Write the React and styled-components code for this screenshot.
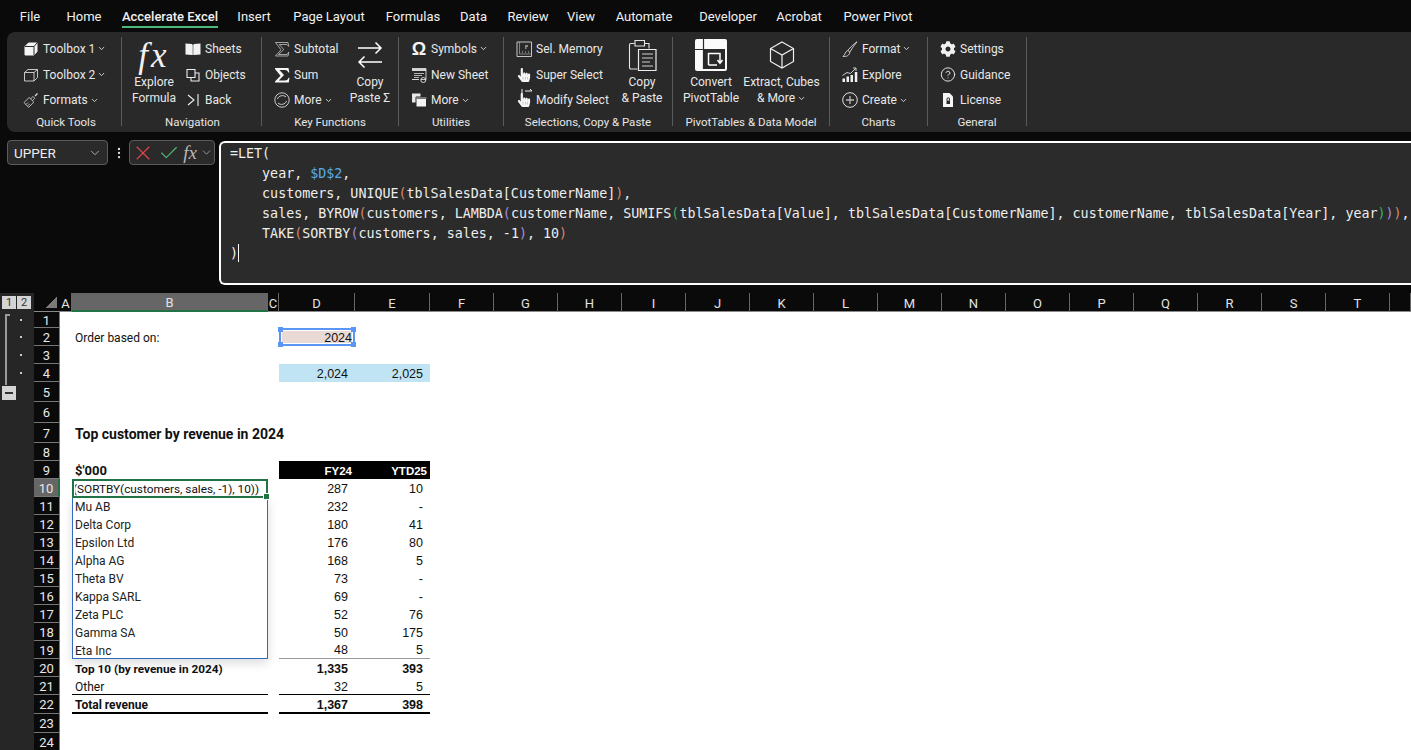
import React from "react";
import styled, { createGlobalStyle } from "styled-components";
import { ChevronDown, CircleHelp, EllipsisVertical, X, Check } from "lucide-react";
import { FaCog, FaHandPointer } from "react-icons/fa";

const Global = createGlobalStyle`
  html, body { margin: 0; padding: 0; background: #0a0a0a; overflow: hidden; }
  * { box-sizing: border-box; }
`;

const Page = styled.div`
  width: 1411px;
  height: 750px;
  overflow: hidden;
  background: #0a0a0a;
  font-family: Roboto, "Liberation Sans", sans-serif;
  display: flex;
  flex-direction: column;
`;

/* ---------- tabs ---------- */
const TabBar = styled.nav`
  height: 32px;
  padding-left: 10px;
  display: flex;
  flex: none;
`;
const Tab = styled.div`
  width: ${p => p.$w}px;
  flex: none;
  display: flex;
  justify-content: center;
  font-size: 13px;
  line-height: 18px;
  padding-top: 8px;
  color: #f0f0f0;
  font-weight: ${p => (p.$active ? 500 : 400)};
  white-space: nowrap;
`;
const TabLabel = styled.span`
  height: 20px;
  border-bottom: ${p => (p.$active ? "2px solid #4fb97c" : "none")};
`;

/* ---------- ribbon ---------- */
const Ribbon = styled.div`
  height: 100px;
  flex: none;
  margin-left: 7px;
  background: #292929;
  border-radius: 8px 0 0 8px;
  display: flex;
  align-items: stretch;
`;
const Group = styled.section`
  width: ${p => p.$w}px;
  flex: none;
  display: flex;
  flex-direction: column;
`;
const GroupBody = styled.div`
  height: 81px;
  padding-top: 4px;
  padding-left: ${p => p.$pad}px;
  display: flex;
`;
const GroupLabel = styled.div`
  height: 18px;
  text-align: center;
  padding-left: ${p => p.$pl || 0}px;
  font-size: 11.5px;
  line-height: 18px;
  color: #e6e6e6;
  white-space: nowrap;
`;
const Sep = styled.div`
  width: 1px;
  flex: none;
  margin: 5px 0 6px;
  background: #5a5a5a;
`;
const Stack = styled.div`
  display: flex;
  flex-direction: column;
  width: ${p => (p.$w ? `${p.$w}px` : "auto")};
  margin-left: ${p => p.$ml || 0}px;
  flex: none;
`;
const SmallBtn = styled.div`
  height: 26px;
  display: flex;
  align-items: center;
  font-size: 12px;
  color: #e8e8e8;
  white-space: nowrap;
`;
const IconBox = styled.span`
  width: 16px;
  height: 16px;
  margin-right: 4px;
  flex: none;
  display: flex;
  align-items: center;
  justify-content: center;
  color: #f0f0f0;
`;
const Chev = styled(ChevronDown).attrs({ size: 9, strokeWidth: 2.5 })`
  margin-left: 2px;
  color: #d8d8d8;
`;
const LargeBtn = styled.div`
  width: ${p => p.$w}px;
  flex: none;
  display: flex;
  flex-direction: column;
  align-items: center;
  font-size: 12px;
  line-height: 16px;
  color: #e8e8e8;
  white-space: nowrap;
`;
const LargeIcon = styled.div`
  height: 38px;
  display: flex;
  align-items: flex-start;
  justify-content: center;
`;
const LargeLine = styled.div`
  display: flex;
  align-items: center;
`;
const FxGlyph = styled.span`
  font-family: "Liberation Serif", serif;
  font-style: italic;
  font-size: ${p => p.$s}px;
  line-height: 1;
  color: ${p => p.$c};
`;
const LargeFx = styled(FxGlyph)`
  margin-top: 2px;
  letter-spacing: 3px;
`;
const OmegaGlyph = styled.span`
  font-family: "Liberation Sans", sans-serif;
  font-size: 18px;
  font-weight: 700;
  line-height: 16px;
  color: #f4f4f4;
`;

/* ---------- icons ---------- */
const Svg = styled.svg`
  display: block;
  flex: none;
  margin-top: ${p => p.$mt || 0}px;
`;
const I = ({ s = 16, h, vb, children, mt }) => (
  <Svg width={s} height={h || s} viewBox={vb || `0 0 ${s} ${h || s}`} fill="none" stroke="currentColor" $mt={mt}>
    {children}
  </Svg>
);
const BoxFilled = () => (
  <I><path d="M2 5.5 5.5 2H14v8.5L11 14H2Z" fill="#f4f4f4" stroke="#f4f4f4" /><path d="M2 5.5h9V14M11 5.5 14 2" stroke="#292929" /></I>
);
const BoxOutline = () => (
  <I><path d="M1.5 5.5 5 2.5h9.5v8L11 14H1.5ZM1.5 5.5H11V14M11 5.5l3.5-3" stroke="#d8d8d8" strokeWidth=".9" /></I>
);
const Brush = () => (
  <I><path d="M1 10.5 6.2 5.5l4.6 4.6-5.2 5.3C4.5 14 2.5 12.5 1 10.5ZM7.5 7l2.5-2.6 1.8 1.8L9.3 8.8M3 12.5l2-2M4.8 13.8l2-2" stroke="#c8c8c8" strokeWidth=".9" /><path d="M12 4l2.5-2.5" stroke="#dcdcdc" strokeWidth="1.2" /></I>
);
const Sheets = () => (
  <I><path d="M.5 2.5 7 3v11l-6.5-.5ZM15.5 2.5 9 3v11l6.5-.5Z" fill="#f2f2f2" stroke="none" /><path d="M7 3.5h2V14H7Z" fill="#bdbdbd" stroke="none" /></I>
);
const Objects = () => (
  <I><path d="M2 2.5h8v8H2ZM6 10.5V14h8V6h-4" stroke="#ececec" strokeWidth="1.1" /></I>
);
const Back = () => (
  <I><path d="M3 3l6 5-6 5M13 2v12" stroke="#f0f0f0" strokeWidth="1.1" /></I>
);
const SubtotalIcon = () => (
  <I><path d="M1.5 1.5H14L14.8 5.5 13 3.5H5.2L9.8 8.5 4.5 13.5H13L14.8 11 14 15H1.5L7 8.8Z" stroke="#c4c4c4" strokeWidth=".8" /></I>
);
const SumIcon = () => (
  <I><path d="M1 1h13.5l.8 4.5h-1C13.5 3.5 12.5 3 10 3H5.5l4.5 5-5.2 5.5H11c2 0 3-.7 3.5-2.7h1L14.8 15.5H1v-.9L6.5 8.7 1 2Z" fill="#f6f6f6" stroke="none" /></I>
);
const MoreCircle = () => (
  <I><circle cx="8" cy="8" r="7.2" stroke="#dcdcdc" strokeWidth=".9" /><path d="M3.5 7C4.5 3.5 9.5 2.5 12 5M12.5 9C11.5 12.5 6.5 13.5 4 11" stroke="#dcdcdc" strokeWidth=".9" /></I>
);
const Arrows = () => (
  <I s={26} h={28} mt={5}><path d="M1 7h23M18.5 1.5 24 7l-5.5 5.5M25 21H2M7.5 15.5 2 21l5.5 5.5" stroke="#fff" strokeWidth="1.5" /></I>
);
const NewSheetIcon = () => (
  <I><path d="M1 1.5h14v11H10M8 12.5H1Z" stroke="#d8d8d8" strokeWidth=".9" /><path d="M1 1.5h14V4H1Z" fill="#d8d8d8" stroke="none" /><path d="M3 6.5h10M3 8.5h8M3 10.5h5" stroke="#d8d8d8" strokeWidth=".8" /><circle cx="12.3" cy="13" r="2.5" stroke="#e8e8e8" strokeWidth=".9" /></I>
);
const UtilMore = () => (
  <I><path d="M1 1.5h8.5v9H1Z" fill="#e8e8e8" stroke="none" /><path d="M5 5h10.5v10H5Z" fill="#f4f4f4" stroke="#292929" /><path d="M5 5h10.5v2H5Z" fill="#777" stroke="none" /></I>
);
const SelMemory = () => (
  <I><path d="M1 1h14.5v14.5H1Z" stroke="#d8d8d8" strokeWidth=".9" /><path d="M3.5 1v12h12" stroke="#9a9a9a" strokeWidth=".8" /><path d="M9 5h3M9 7h1.5M6 11h.8M9 11h.8M12 11h.8" stroke="#e8e8e8" /></I>
);
const HandSlot = styled.span`
  position: relative;
  display: flex;
  color: #f6f6f6;
`;
const HandTicks = styled.svg`
  position: absolute;
  top: -5px;
  left: 4px;
`;
const Clipboard = () => (
  <I s={29} h={32} mt={3}><path d="M2.5 4.5h4M16.5 4.5H21v5M9.5 30h-7a1.5 1.5 0 0 1-1-1.5V6a1.5 1.5 0 0 1 1-1.5" stroke="#e4e4e4" strokeWidth="1.1" /><path d="M7 1.5h9.5V7H7Z" stroke="#e4e4e4" strokeWidth="1.1" /><path d="M10.5 10.5H28v21H10.5Z" stroke="#ececec" strokeWidth="1.2" /><path d="M14 15h11M14 19h11M14 23h8M14 27h11" stroke="#cfcfcf" strokeWidth="1.2" /></I>
);
const Convert = () => (
  <I s={32} mt={3}>
    <rect width="32" height="32" rx="2" fill="#fafafa" stroke="none" />
    <path d="M9 11h21v19H9Z" fill="#292929" stroke="none" />
    <path d="M8.5 0v30M0 10.5h30" stroke="#292929" strokeWidth="1.2" />
    <path d="M13.5 26V14.5H25V24M22.5 21l2.5 3.2 2.5-3.2M13.5 26H22" stroke="#fff" strokeWidth="1.5" />
  </I>
);
const Cube = () => (
  <I s={26} h={28} mt={5}><path d="M13 1 24.5 7.5v13L13 27 1.5 20.5v-13ZM1.5 7.5 13 14l11.5-6.5M13 14v13" stroke="#f0f0f0" strokeWidth="1.2" /></I>
);
const FormatPen = () => (
  <I><path d="M15 .8c-2.5 3-5 6.700-7.200 10.200L5.800 9.500C8.300 6.200 11.800 3 15 .8ZM5.800 9.500C3 10.500 3.500 13.500 1 15.500c3.500.3 6.500-1 6.800-4.500" stroke="#dedede" strokeWidth=".9" /></I>
);
const ExploreIcon = () => (
  <I><path d="M.5 11.5H3V15H.5ZM4.5 9.5H7V15H4.5ZM8.5 8H11v7H8.5ZM12.8 5h2.500v10h-2.500Z" fill="#f0f0f0" stroke="none" /><path d="M.5 8.5 5 5.500l3.500 1L13.500 1.500M11 1h3v3" stroke="#e0e0e0" strokeWidth=".9" /></I>
);
const CreateIcon = () => (
  <I><circle cx="8" cy="8" r="7.3" stroke="#e4e4e4" /><path d="M8 4v8M4 8h8" stroke="#b8b8b8" strokeWidth="1.3" /></I>
);
const LicenseIcon = () => (
  <I><path d="M3 1h6.5L13 4.500V15H3Z" fill="#f6f6f6" stroke="none" /><path d="M6.5 8.5H10V12H6.5Z" fill="#292929" stroke="none" /><path d="M7 8.5V7a1.2 1.2 0 0 1 2.500 0v1.500" stroke="#292929" /></I>
);

const HandIcon = ({ ticks }) => (
  <HandSlot>
    <FaHandPointer size={14} />
    {ticks && (
      <HandTicks width="12" height="7" viewBox="0 0 12 7" stroke="#f4f4f4" fill="none">
        <path d="M4 3h7M9 1l2 2M1 1v5" />
      </HandTicks>
    )}
  </HandSlot>
);

const Small = ({ icon, children, chev }) => (
  <SmallBtn>
    <IconBox>{icon}</IconBox>
    {children}
    {chev && <Chev />}
  </SmallBtn>
);

/* ---------- formula bar ---------- */
const FormulaRow = styled.div`
  height: 146px;
  flex: none;
  margin-top: 8px;
  margin-left: 7px;
  display: flex;
  align-items: flex-start;
`;
const NameBox = styled.div`
  width: 101px;
  height: 25px;
  flex: none;
  background: #2a2a2a;
  border: 1px solid #5c5c5c;
  border-radius: 4px;
  padding: 0 5px 0 6px;
  display: flex;
  align-items: center;
  justify-content: space-between;
  color: #eee;
  font-size: 13.5px;
`;
const Grip = styled.div`
  width: 21px;
  height: 25px;
  flex: none;
  display: flex;
  align-items: center;
  justify-content: center;
  color: #e0e0e0;
`;
const ActionBox = styled.div`
  width: 86px;
  height: 25px;
  flex: none;
  background: #2a2a2a;
  border: 1px solid #5c5c5c;
  border-radius: 4px;
  padding: 0 1px;
  display: flex;
  align-items: center;
  justify-content: space-between;
`;
const Editor = styled.div`
  flex: 1;
  height: 144px;
  margin: 1px 0 0 4px;
  padding: 1px 0 0 9px;
  background: #2b2b2b;
  border: 2px solid #fff;
  border-right: none;
  border-radius: 6px 0 0 6px;
  font-family: "DejaVu Sans Mono", "Liberation Mono", monospace;
  font-size: 13.33px;
  line-height: 20px;
  color: #eee;
  white-space: pre;
  overflow: hidden;
`;
const FLine = styled.div`
  height: 20px;
`;
const P = styled.span`
  color: ${p => ({ o: "#d5876a", v: "#a08fe0", g: "#2fb36b" }[p.$c])};
`;
const Ref = styled.span`
  color: #5aa9e6;
`;
const Caret = styled.span`
  display: inline-block;
  width: 1px;
  height: 18px;
  background: #fff;
  vertical-align: -4px;
`;

/* ---------- sheet ---------- */
const COLS = ["A", "B", "C", "D", "E", "F", "G", "H", "I", "J", "K", "L", "M", "N", "O", "P", "Q", "R", "S", "T", ""];
const colIndex = l => COLS.indexOf(l) + 3;
const ROWH = [16, 18, 18, 18, 20, 21, 20, 18, 18, 18, 18, 18, 18, 18, 18, 18, 18, 18, 18, 18, 18, 19, 19, 18];

const Sheet = styled.div`
  margin-top: 7px;
  flex: none;
  height: 458px;
  display: grid;
  grid-template-columns: 34px 26px 12px 196px 11px 76px 75px repeat(15, 64px) 1fr;
  grid-template-rows: 19px ${ROWH.map(h => `${h}px`).join(" ")};
  overflow: hidden;
`;
const Rail = styled.div`
  grid-column: 1;
  grid-row: 1 / -1;
  background: #262626;
`;
const Canvas = styled.div`
  grid-column: 3 / -1;
  grid-row: 2 / -1;
  background: #fff;
`;
const LevelBtns = styled.div`
  grid-column: 1;
  grid-row: 1;
  padding: 3px 0 0 2px;
  display: flex;
  gap: 1px;
  z-index: 1;
`;
const LevelBtn = styled.div`
  width: 14px;
  height: 13px;
  background: #d4d4d4;
  color: #333;
  font-size: 11px;
  line-height: 13px;
  text-align: center;
`;
const Corner = styled.div`
  grid-column: 2;
  grid-row: 1;
  background: #0a0a0a;
  border-bottom: 1px solid #8a8a8a;
  display: flex;
  justify-content: flex-end;
  align-items: flex-end;
  padding: 0 3px 3px 0;
`;
const CornerMark = styled.div`
  width: 11px;
  height: 11px;
  background: linear-gradient(135deg, transparent 50%, #7a7a7a 50%);
`;
const ColHead = styled.div`
  grid-column: ${p => p.$col};
  grid-row: 1;
  background: ${p => (p.$sel ? "#666" : "#0a0a0a")};
  border-right: 1px solid #666;
  border-bottom: ${p => (p.$sel ? "2px solid #217346" : "1px solid #8a8a8a")};
  color: #e4e4e4;
  font-size: 13px;
  padding-top: 2px;
  display: flex;
  align-items: center;
  justify-content: center;
`;
const RowHead = styled.div`
  grid-column: 2;
  grid-row: ${p => p.$row + 1};
  background: ${p => (p.$sel ? "#666" : "#0a0a0a")};
  border-bottom: 1px solid #777;
  border-right: ${p => (p.$sel ? "2px solid #217346" : "1px solid #777")};
  color: #e8e8e8;
  font-size: 13px;
  padding-top: 1px;
  display: flex;
  align-items: center;
  justify-content: center;
`;
const OutlineDot = styled.div`
  grid-column: 1;
  grid-row: ${p => p.$row + 1};
  display: flex;
  align-items: center;
  padding-left: 20px;
  &::after {
    content: "";
    width: 2px;
    height: 2px;
    background: #c8c8c8;
  }
`;
const Bracket = styled.div`
  grid-column: 1;
  grid-row: 2 / 6;
  width: 5px;
  margin: 2px 0 -3px 5px;
  border-left: 2px solid #9a9a9a;
  border-top: 2px solid #9a9a9a;
`;
const MinusBtn = styled.div`
  grid-column: 1;
  grid-row: 6;
  width: 14px;
  height: 14px;
  margin: 4px 0 0 2px;
  background: #d4d4d4;
  display: flex;
  align-items: center;
  justify-content: center;
  &::after {
    content: "";
    width: 8px;
    height: 2px;
    background: #333;
  }
`;
const Cell = styled.div`
  grid-column: ${p => colIndex(p.$col)}${p => (p.$span ? ` / span ${p.$span}` : "")};
  grid-row: ${p => p.$row + 1};
  display: flex;
  align-items: center;
  padding-top: ${p => p.$pt || 1}px;
  white-space: nowrap;
  min-width: 0;
  color: ${p => p.$color || "#111"};
  background: ${p => p.$bg || "transparent"};
  border-bottom: ${p => p.$under || "none"};
`;
const TextCell = styled(Cell)`
  padding-left: 3px;
  font-size: ${p => p.$size || 12}px;
  font-weight: ${p => (p.$bold ? 700 : 400)};
  font-family: Roboto, sans-serif;
`;
const NumCell = styled(Cell)`
  justify-content: flex-end;
  padding-right: ${p => (p.$pr === undefined ? 7 : p.$pr)}px;
  font-family: "Liberation Sans", Arial, sans-serif;
  font-size: ${p => p.$size || 12.5}px;
  font-weight: ${p => (p.$bold ? 700 : 400)};
`;
const Selected = styled.div`
  grid-column: ${colIndex("D")};
  grid-row: 3;
  position: relative;
  background: #e9dad6;
  border: 2px solid #5b96f5;
  box-shadow: inset 0 0 0 1px #fff;
  display: flex;
  align-items: center;
  justify-content: flex-end;
  padding: 1px 1px 0 0;
  font-family: "Liberation Sans", Arial, sans-serif;
  font-size: 12.5px;
  color: #111;
`;
const Handle = styled.span`
  position: absolute;
  width: 5px;
  height: 5px;
  background: #5b96f5;
  ${p => (p.$top ? "top: -3px;" : "bottom: -3px;")}
  ${p => (p.$left ? "left: -3px;" : "right: -3px;")}
`;
const ActiveCell = styled.div`
  grid-column: ${colIndex("B")};
  grid-row: 11;
  position: relative;
  z-index: 3;
  margin-bottom: -1px;
  border: 2px solid #217346;
  display: flex;
  align-items: center;
  padding-left: 1px;
  font-family: Roboto, sans-serif;
  font-size: 11.8px;
  color: #111;
  white-space: nowrap;
`;
const ActiveText = styled.span`
  display: block;
  overflow: hidden;
  text-indent: -2px;
`;
const FillHandle = styled.span`
  position: absolute;
  right: -3px;
  bottom: -3px;
  width: 5px;
  height: 5px;
  background: #217346;
  outline: 1px solid #fff;
`;
const Spill = styled.div`
  grid-column: ${colIndex("B")};
  grid-row: 12 / 21;
  z-index: 2;
  border: 1.5px solid #2f6cc0;
  border-top: none;
  box-shadow: 0 4px 10px rgba(0, 0, 0, 0.14);
  display: grid;
  grid-auto-rows: 18px;
  padding: 1px 0 0 2px;
  font-family: Roboto, sans-serif;
  font-size: 12px;
  color: #222;
  align-items: center;
`;

const groups = ["Mu AB", "Delta Corp", "Epsilon Ltd", "Alpha AG", "Theta BV", "Kappa SARL", "Zeta PLC", "Gamma SA", "Eta Inc"];
const numbers = [
  [10, "287", "10"], [11, "232", "-"], [12, "180", "41"], [13, "176", "80"], [14, "168", "5"],
  [15, "73", "-"], [16, "69", "-"], [17, "52", "76"], [18, "50", "175"], [19, "48", "5"],
];
const tabs = [
  ["File", 40], ["Home", 68], ["Accelerate Excel", 104, true], ["Insert", 64], ["Page Layout", 86], ["Formulas", 82], ["Data", 39],
  ["Review", 70], ["View", 36], ["Automate", 90], ["Developer", 78], ["Acrobat", 64], ["Power Pivot", 94],
];

const Under = "1px solid #000";
const Thick = "2px solid #000";

export default function App() {
  return (
    <Page>
      <Global />
      <TabBar>
        {tabs.map(([t, w, a]) => (
          <Tab key={t} $w={w} $active={a}><TabLabel $active={a}>{t}</TabLabel></Tab>
        ))}
      </TabBar>

      <Ribbon>
        <Group $w={114}>
          <GroupBody $pad={16}>
            <Stack>
              <Small icon={<BoxFilled />} chev>Toolbox 1</Small>
              <Small icon={<BoxOutline />} chev>Toolbox 2</Small>
              <Small icon={<Brush />} chev>Formats</Small>
            </Stack>
          </GroupBody>
          <GroupLabel $pl={4}>Quick Tools</GroupLabel>
        </Group>
        <Sep />
        <Group $w={139}>
          <GroupBody $pad={10}>
            <LargeBtn $w={44}>
              <LargeIcon><LargeFx $s={35} $c="#f2f2f2">fx</LargeFx></LargeIcon>
              <LargeLine>Explore</LargeLine>
              <LargeLine>Formula</LargeLine>
            </LargeBtn>
            <Stack $ml={9}>
              <Small icon={<Sheets />}>Sheets</Small>
              <Small icon={<Objects />}>Objects</Small>
              <Small icon={<Back />}>Back</Small>
            </Stack>
          </GroupBody>
          <GroupLabel $pl={2}>Navigation</GroupLabel>
        </Group>
        <Sep />
        <Group $w={136}>
          <GroupBody $pad={12}>
            <Stack $w={71}>
              <Small icon={<SubtotalIcon />}>Subtotal</Small>
              <Small icon={<SumIcon />}>Sum</Small>
              <Small icon={<MoreCircle />} chev>More</Small>
            </Stack>
            <LargeBtn $w={50}>
              <LargeIcon><Arrows /></LargeIcon>
              <LargeLine>Copy</LargeLine>
              <LargeLine>Paste Σ</LargeLine>
            </LargeBtn>
          </GroupBody>
          <GroupLabel>Key Functions</GroupLabel>
        </Group>
        <Sep />
        <Group $w={104}>
          <GroupBody $pad={12}>
            <Stack>
              <Small icon={<OmegaGlyph>Ω</OmegaGlyph>} chev>Symbols</Small>
              <Small icon={<NewSheetIcon />}>New Sheet</Small>
              <Small icon={<UtilMore />} chev>More</Small>
            </Stack>
          </GroupBody>
          <GroupLabel>Utilities</GroupLabel>
        </Group>
        <Sep />
        <Group $w={168}>
          <GroupBody $pad={12}>
            <Stack $w={102}>
              <Small icon={<SelMemory />}>Sel. Memory</Small>
              <Small icon={<HandIcon />}>Super Select</Small>
              <Small icon={<HandIcon ticks />}>Modify Select</Small>
            </Stack>
            <LargeBtn $w={48}>
              <LargeIcon><Clipboard /></LargeIcon>
              <LargeLine>Copy</LargeLine>
              <LargeLine>&amp; Paste</LargeLine>
            </LargeBtn>
          </GroupBody>
          <GroupLabel>Selections, Copy &amp; Paste</GroupLabel>
        </Group>
        <Sep />
        <Group $w={156}>
          <GroupBody $pad={8}>
            <LargeBtn $w={60}>
              <LargeIcon><Convert /></LargeIcon>
              <LargeLine>Convert</LargeLine>
              <LargeLine>PivotTable</LargeLine>
            </LargeBtn>
            <LargeBtn $w={81}>
              <LargeIcon><Cube /></LargeIcon>
              <LargeLine>Extract, Cubes</LargeLine>
              <LargeLine>&amp; More<Chev /></LargeLine>
            </LargeBtn>
          </GroupBody>
          <GroupLabel>PivotTables &amp; Data Model</GroupLabel>
        </Group>
        <Sep />
        <Group $w={97}>
          <GroupBody $pad={12}>
            <Stack>
              <Small icon={<FormatPen />} chev>Format</Small>
              <Small icon={<ExploreIcon />}>Explore</Small>
              <Small icon={<CreateIcon />} chev>Create</Small>
            </Stack>
          </GroupBody>
          <GroupLabel>Charts</GroupLabel>
        </Group>
        <Sep />
        <Group $w={98}>
          <GroupBody $pad={12}>
            <Stack>
              <Small icon={<FaCog size={16} />}>Settings</Small>
              <Small icon={<CircleHelp size={17} strokeWidth={1.4} />}>Guidance</Small>
              <Small icon={<LicenseIcon />}>License</Small>
            </Stack>
          </GroupBody>
          <GroupLabel>General</GroupLabel>
        </Group>
        <Sep />
      </Ribbon>

      <FormulaRow>
        <NameBox>UPPER<ChevronDown size={14} strokeWidth={1.5} color="#bbb" /></NameBox>
        <Grip><EllipsisVertical size={14} strokeWidth={2} /></Grip>
        <ActionBox>
          <X size={24} strokeWidth={1.1} color="#e0474c" />
          <Check size={22} strokeWidth={1.2} color="#4fb97c" />
          <FxGlyph $s={19} $c="#b8b8b8">fx</FxGlyph>
          <ChevronDown size={13} strokeWidth={1.5} color="#aaa" />
        </ActionBox>
        <Editor>
          <FLine>=LET(</FLine>
          <FLine>    year, <Ref>$D$2</Ref>,</FLine>
          <FLine>    customers, UNIQUE<P $c="o">(</P>tblSalesData[CustomerName]<P $c="o">)</P>,</FLine>
          <FLine>    sales, BYROW<P $c="o">(</P>customers, LAMBDA<P $c="v">(</P>customerName, SUMIFS<P $c="g">(</P>tblSalesData[Value], tblSalesData[CustomerName], customerName, tblSalesData[Year], year<P $c="g">)</P><P $c="v">)</P><P $c="o">)</P>,</FLine>
          <FLine>    TAKE<P $c="o">(</P>SORTBY<P $c="v">(</P>customers, sales, -1<P $c="v">)</P>, 10<P $c="o">)</P></FLine>
          <FLine>)<Caret /></FLine>
        </Editor>
      </FormulaRow>

      <Sheet>
        <Rail />
        <Canvas />
        <LevelBtns><LevelBtn>1</LevelBtn><LevelBtn>2</LevelBtn></LevelBtns>
        <Corner><CornerMark /></Corner>
        {COLS.map((c, i) => (
          <ColHead key={i} $col={i + 3} $sel={c === "B"}>{c}</ColHead>
        ))}
        {ROWH.map((_, i) => (
          <RowHead key={i} $row={i + 1} $sel={i + 1 === 10}>{i + 1}</RowHead>
        ))}
        <Bracket />
        {[1, 2, 3, 4].map(r => <OutlineDot key={r} $row={r} />)}
        <MinusBtn />

        <TextCell $col="B" $row={2} $span={2}>Order based on:</TextCell>
        <Selected>
          2024
          <Handle $top $left /><Handle $top /><Handle $left /><Handle />
        </Selected>
        <NumCell $col="D" $row={4} $bg="#c1e4f5">2,024</NumCell>
        <NumCell $col="E" $row={4} $bg="#c1e4f5">2,025</NumCell>

        <TextCell $col="B" $row={7} $span={4} $bold $size={14}>Top customer by revenue in 2024</TextCell>

        <TextCell $col="B" $row={9} $bold $size={13}>$'000</TextCell>
        <NumCell $col="D" $row={9} $bg="#000" $color="#fff" $bold $pr={3} $size={11.5}>FY24</NumCell>
        <NumCell $col="E" $row={9} $bg="#000" $color="#fff" $bold $pr={3} $size={11.5}>YTD25</NumCell>

        <ActiveCell>
          <ActiveText>(SORTBY(customers, sales, -1), 10))</ActiveText>
          <FillHandle />
        </ActiveCell>
        <Spill>
          {groups.map(g => <span key={g}>{g}</span>)}
        </Spill>

        {numbers.map(([r, a, b]) => (
          <React.Fragment key={r}>
            <NumCell $col="D" $row={r} $under={r === 19 ? "1px solid #999" : undefined}>{a}</NumCell>
            <NumCell $col="E" $row={r} $under={r === 19 ? "1px solid #999" : undefined}>{b}</NumCell>
          </React.Fragment>
        ))}

        <TextCell $col="B" $row={20} $bold $size={11.8}>Top 10 (by revenue in 2024)</TextCell>
        <NumCell $col="D" $row={20} $bold>1,335</NumCell>
        <NumCell $col="E" $row={20} $bold>393</NumCell>

        <TextCell $col="B" $row={21} $pt={2} $under={Under}>Other</TextCell>
        <NumCell $col="D" $row={21} $pt={2} $under={Under}>32</NumCell>
        <NumCell $col="E" $row={21} $pt={2} $under={Under}>5</NumCell>

        <TextCell $col="B" $row={22} $pt={3} $bold $under={Thick}>Total revenue</TextCell>
        <NumCell $col="D" $row={22} $pt={3} $bold $under={Thick}>1,367</NumCell>
        <NumCell $col="E" $row={22} $pt={3} $bold $under={Thick}>398</NumCell>
      </Sheet>
    </Page>
  );
}
